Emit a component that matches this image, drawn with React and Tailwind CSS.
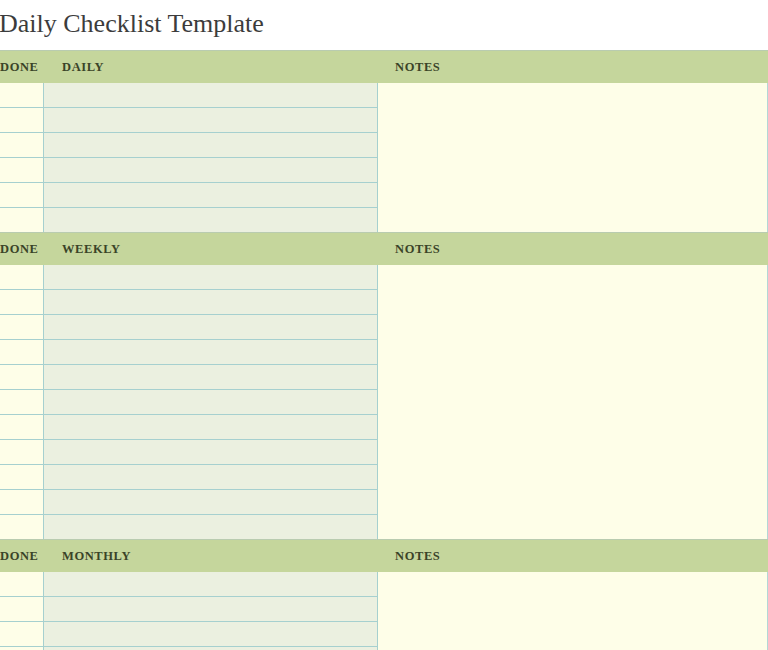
import React from "react";

function Section({ label, rows }) {
  return (
    <div>
      <div className="flex h-[33px] items-center bg-[#c5d69c] border-t border-[#b9ccb0] text-[12.5px] font-bold text-[#3a4428] tracking-[0.6px]">
        <div className="w-[45px]">DONE</div>
        <div className="w-[333px] pl-[17px]">{label}</div>
        <div className="flex-1 pl-[17px]">NOTES</div>
      </div>
      <div className="flex">
        <div className="w-[378px] border-r border-[#a6d0cf]">
          {Array.from({ length: rows }).map((_, i) => (
            <div key={i} className="flex h-[25px] border-t border-[#a6d0cf] first:border-t-0 first:h-[24px]">
              <div className="w-[44px] border-r border-[#a6d0cf] bg-[#fefee8]" />
              <div className="flex-1 bg-[#ebf0e0]" />
            </div>
          ))}
        </div>
        <div className="flex-1 bg-[#fefee8] border-r border-[#b3d8d6]" />
      </div>
    </div>
  );
}

export default function App() {
  return (
    <div className="w-[768px] h-[650px] overflow-hidden bg-white" style={{ fontFamily: '"Liberation Serif", "DejaVu Serif", serif' }}>
      <div className="h-[50px] pt-[8px] text-[26px] leading-[32px] text-[#3c3c3c] -ml-[1px]">Daily Checklist Template</div>
      <Section label="DAILY" rows={6} />
      <Section label="WEEKLY" rows={11} />
      <Section label="MONTHLY" rows={4} />
    </div>
  );
}
